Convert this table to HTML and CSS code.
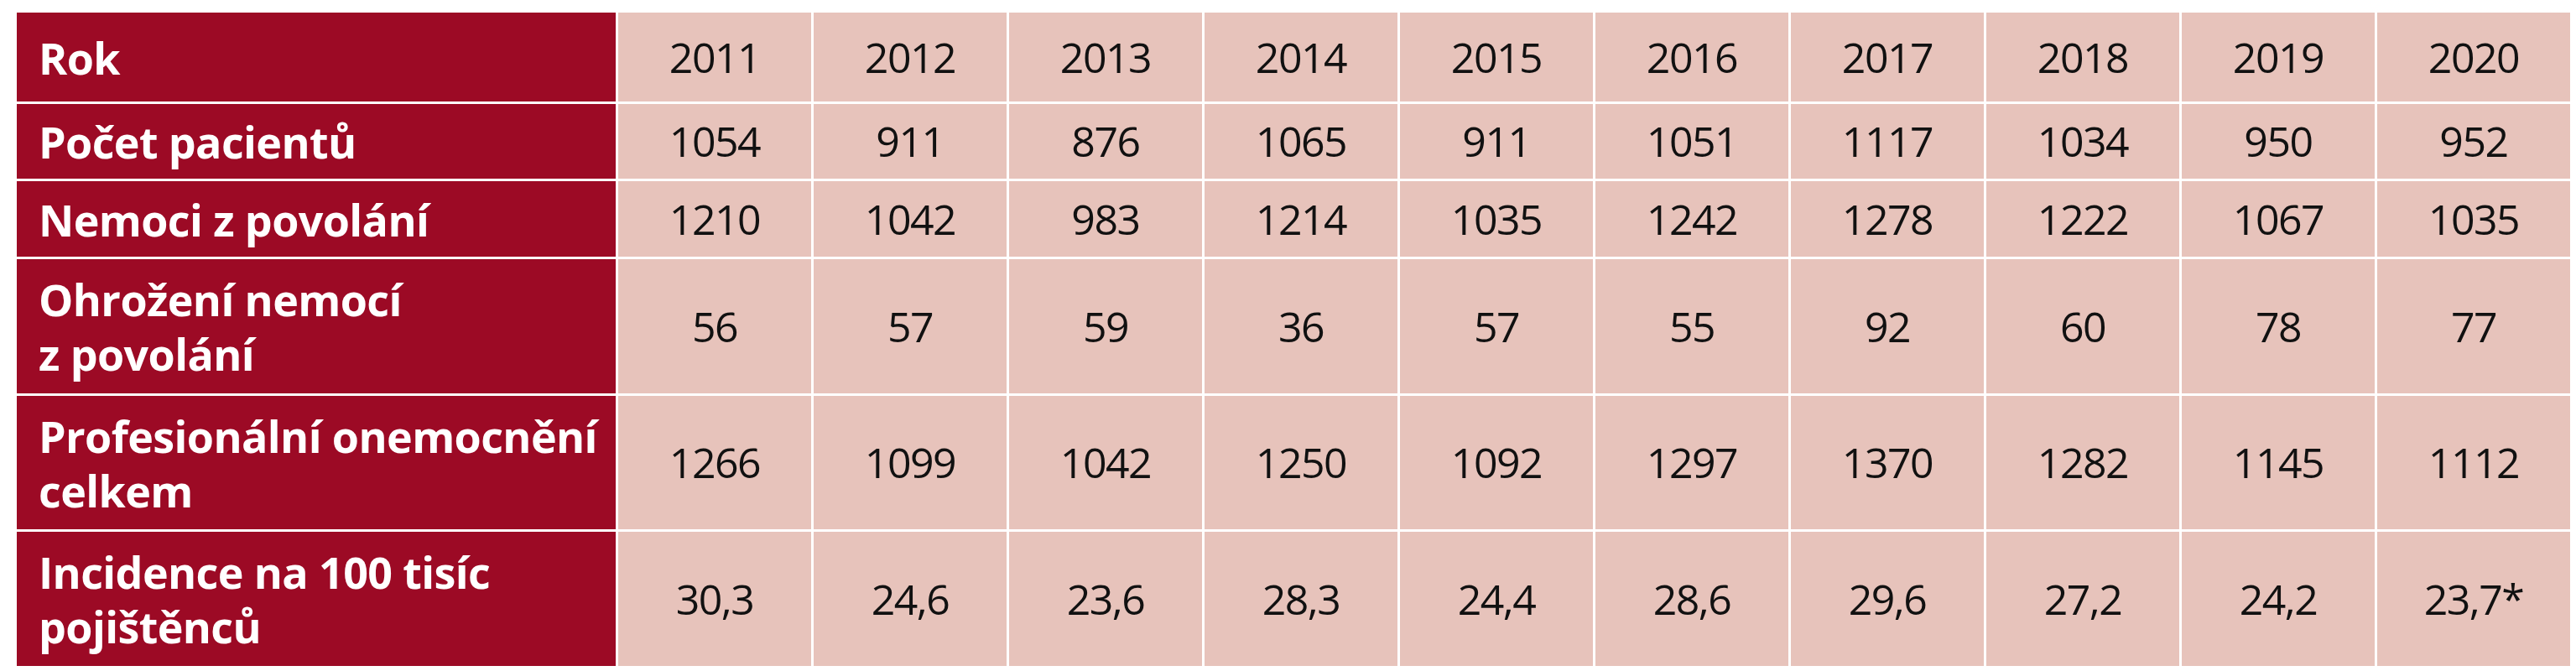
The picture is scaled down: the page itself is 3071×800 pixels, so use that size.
FILE: index.html
```html
<!DOCTYPE html>
<html lang="cs">
<head>
<meta charset="utf-8">
<title>Profesionální onemocnění 2011–2020</title>
<link rel="stylesheet" href="styles.css">
</head>
<body>
<div class="page">
  <div class="table">
    <div class="head r1">Rok</div>
    <div class="cell r1">2011</div><div class="cell r1">2012</div><div class="cell r1">2013</div><div class="cell r1">2014</div><div class="cell r1">2015</div><div class="cell r1">2016</div><div class="cell r1">2017</div><div class="cell r1">2018</div><div class="cell r1">2019</div><div class="cell r1">2020</div>

    <div class="head">Počet pacientů</div>
    <div class="cell">1054</div><div class="cell">911</div><div class="cell">876</div><div class="cell">1065</div><div class="cell">911</div><div class="cell">1051</div><div class="cell">1117</div><div class="cell">1034</div><div class="cell">950</div><div class="cell">952</div>

    <div class="head">Nemoci z povolání</div>
    <div class="cell">1210</div><div class="cell">1042</div><div class="cell">983</div><div class="cell">1214</div><div class="cell">1035</div><div class="cell">1242</div><div class="cell">1278</div><div class="cell">1222</div><div class="cell">1067</div><div class="cell">1035</div>

    <div class="head">Ohrožení nemocí<br>z povolání</div>
    <div class="cell">56</div><div class="cell">57</div><div class="cell">59</div><div class="cell">36</div><div class="cell">57</div><div class="cell">55</div><div class="cell">92</div><div class="cell">60</div><div class="cell">78</div><div class="cell">77</div>

    <div class="head">Profesionální onemocnění<br>celkem</div>
    <div class="cell">1266</div><div class="cell">1099</div><div class="cell">1042</div><div class="cell">1250</div><div class="cell">1092</div><div class="cell">1297</div><div class="cell">1370</div><div class="cell">1282</div><div class="cell">1145</div><div class="cell">1112</div>

    <div class="head">Incidence na 100 tisíc<br>pojištěnců</div>
    <div class="cell">30,3</div><div class="cell">24,6</div><div class="cell">23,6</div><div class="cell">28,3</div><div class="cell">24,4</div><div class="cell">28,6</div><div class="cell">29,6</div><div class="cell">27,2</div><div class="cell">24,2</div><div class="cell">23,7*</div>
  </div>
</div>
</body>
</html>
```

FILE: styles.css
```css
html, body {
  margin: 0;
  padding: 0;
  background: #ffffff;
}

.page {
  padding: 15px 0 0 20px;
}

.table {
  display: grid;
  grid-template-columns: 714px repeat(10, 230px);
  grid-template-rows: 106px 89px 90px 160px 159px 160px;
  column-gap: 3px;
  row-gap: 3px;
  font-family: "Open Sans", "Noto Sans", "Liberation Sans", sans-serif;
  line-height: 65px;
}

.head {
  background: #9c0a25;
  color: #ffffff;
  font-size: 52px;
  font-weight: 700;
  letter-spacing: -0.6px;
  padding-left: 26px;
  display: flex;
  align-items: center;
  white-space: nowrap;
}

.cell {
  background: #e7c3bb;
  color: #111111;
  font-size: 50px;
  letter-spacing: -1.5px;
  display: flex;
  align-items: center;
  justify-content: center;
  white-space: nowrap;
}
```
